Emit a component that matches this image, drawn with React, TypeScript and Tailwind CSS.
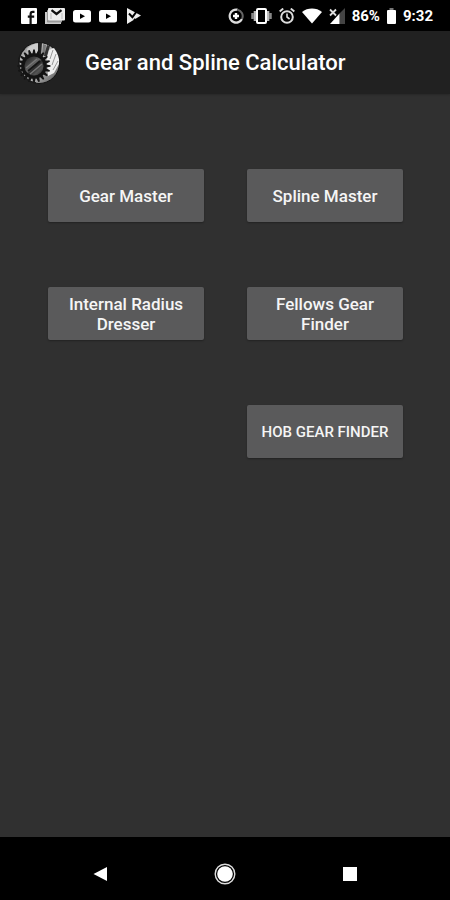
interface MenuButtonProps {
  label: string;
  className?: string;
}

const GEAR_TEETH = Array.from({ length: 20 }, (_, i) => i * 18);

function StatusBar() {
  return (
    <div className="flex h-[31px] items-center justify-between bg-black pt-px pr-[17px] pl-[21px] text-white">
      <div className="flex items-center gap-2">
        {/* Facebook */}
        <svg className="h-4 w-4" viewBox="0 0 16 16">
          <rect width="16" height="16" rx="1" fill="#fff" />
          <path
            d="M9.6 16V6.2c0-1.500.8-2.300 2.200-2.300h1.700M6.800 8.600h6.400"
            fill="none"
            stroke="#111"
            strokeWidth="2.2"
          />
        </svg>
        {/* Stacked mail */}
        <svg className="h-[18px] w-5" viewBox="0 0 20 18">
          <path d="M0 5v12h16v-2H2V5z" fill="#ccc" />
          <rect x="2" y="3" width="15" height="12.5" rx="1" fill="#999" />
          <rect x="3" y="1" width="17" height="12.5" rx="1" fill="#eee" />
          <path
            d="M6.5 3.2L11.5 7l5-3.8"
            fill="none"
            stroke="#111"
            strokeWidth="2.2"
          />
          <path d="M6 6v6M17 6v6" stroke="#bbb" />
        </svg>
        <YoutubeIcon />
        <YoutubeIcon />
        {/* Play store check */}
        <svg className="h-4 w-4" viewBox="0 0 16 16">
          <path d="M2 0l14 7.5L2 16z" fill="#eee" />
          <path
            d="M4 5.5l3.4 3.6L12 3"
            fill="none"
            stroke="#000"
            strokeWidth="2"
          />
          <path
            d="M9 11l4 3"
            fill="none"
            stroke="#000"
            strokeWidth="2"
          />
        </svg>
      </div>

      <div className="flex items-center gap-[7px] font-['Roboto',sans-serif] text-[15px] font-bold">
        {/* Data saver */}
        <svg className="h-4 w-4" viewBox="0 0 16 16" fill="none">
          <path
            d="M9.5 1.7A6.5 6.5 0 1 0 14 11"
            stroke="#ddd"
            strokeWidth="2.2"
          />
          <path
            d="M9.5 1.7A6.5 6.5 0 0 1 14 11"
            stroke="#666"
            strokeWidth="2"
          />
          <path d="M8 5v6M5 8h6" stroke="#fff" strokeWidth="2.4" />
        </svg>
        {/* Vibrate */}
        <svg className="h-4 w-[21px]" viewBox="0 0 21 16" fill="none">
          <path d="M1.5 5v6M19.5 5v6" stroke="#888" strokeWidth="2.5" />
          <path d="M4 3v10M17 3v10" stroke="#bbb" strokeWidth="2.6" />
          <rect
            x="6"
            y="1"
            width="9"
            height="14"
            rx="1"
            fill="#000"
            stroke="#fff"
            strokeWidth="2"
          />
        </svg>
        {/* Alarm */}
        <svg className="h-4 w-4" viewBox="0 0 16 16" fill="none">
          <circle cx="8" cy="9" r="5.8" stroke="#ddd" strokeWidth="2" />
          <path d="M.7 3.6l3.5-3M15.3 3.6l-3.5-3" stroke="#ddd" strokeWidth="2" />
          <path d="M8 5.5V9l2.6 2" stroke="#ddd" strokeWidth="1.6" />
        </svg>
        {/* Wifi */}
        <svg className="h-4 w-5" viewBox="0 0 20 16">
          <path d="M0 4C5.6-.6 14.4-.6 20 4L10 15.6z" fill="#fff" />
        </svg>
        {/* No signal */}
        <svg className="h-4 w-4" viewBox="0 0 16 16">
          <path d="M10.5 5.5L16 0v16h-5.5z" fill="#444" />
          <path d="M1 16l9.5-10.5V16z" fill="#fff" />
          <path d="M1 1.5l6 6M7 1.5l-6 6" stroke="#ddd" strokeWidth="1.8" />
        </svg>
        <span>86%</span>
        {/* Battery */}
        <svg className="h-4 w-[9px]" viewBox="0 0 9 16">
          <path d="M2.5 0h4v2h-4z" fill="#777" />
          <rect y="2" width="9" height="14" rx="1" fill="#fff" />
        </svg>
        <span>9:32</span>
      </div>
    </div>
  );
}

function YoutubeIcon() {
  return (
    <svg className="h-[14px] w-[18px]" viewBox="0 0 18 14">
      <rect y="1" width="18" height="12.5" rx="2.5" fill="#fff" />
      <path d="M7 4.5l5 2.8-5 2.8z" fill="#000" />
    </svg>
  );
}

function GearLogo() {
  return (
    <svg className="h-11 w-11 shrink-0" viewBox="0 0 44 44">
      <defs>
        <linearGradient id="ring" x1="0" y1="0" x2="1" y2="1">
          <stop offset="0" stopColor="#666" />
          <stop offset=".25" stopColor="#bbb" />
          <stop offset=".6" stopColor="#bbb" />
          <stop offset="1" stopColor="#444" />
        </linearGradient>
        <linearGradient id="hub" x1="0" y1="0" x2="1" y2="1">
          <stop offset="0" stopColor="#1c1c1c" />
          <stop offset=".3" stopColor="#444" />
          <stop offset=".46" stopColor="#666" />
          <stop offset=".56" stopColor="#2a2a2a" />
          <stop offset=".75" stopColor="#555" />
          <stop offset="1" stopColor="#1a1a1a" />
        </linearGradient>
      </defs>
      <circle cx="23" cy="22" r="20.5" fill="url(#ring)" stroke="#111" />
      {/* Reflections along the rim */}
      <path d="M11 8Q16 2.500 22 2.500l0 10-9 0z" fill="#ccc" />
      <path d="M22 2l4 0-1 12-3 0z" fill="#222" />
      <path d="M27 3l3 1-1 11-3-1z" fill="#777" />
      <path d="M31 4l3 1-3 10-3 0z" fill="#333" />
      <path d="M31 17l2-8 5-2q6 8 5 16l-5 9-6 3z" fill="#eee" />
      <path d="M37 9l-3 9M40 13l-4 11M42 20l-5 9" stroke="#999" />
      {/* Dark gear with its teeth reaching into the rim */}
      <circle cx="18" cy="25" r="12.8" fill="#131313" />
      {GEAR_TEETH.map((angle) => (
        <path
          key={angle}
          d="M16.4 13l.8-4.500h1.600l.8 4.500z"
          fill="#131313"
          transform={`rotate(${angle} 18 25)`}
        />
      ))}
      <path
        d="M9 7A20.500 20.500 0 0 0 20 42"
        fill="none"
        stroke="#1a1a1a"
        strokeWidth="1.5"
      />
      <circle cx="18" cy="25" r="9.5" fill="url(#hub)" />
      <path d="M10 27l11-9M14 33l12-10" stroke="#777" strokeWidth="1.5" />
      <path d="M12 30l12-10" stroke="#161616" strokeWidth="2" />
    </svg>
  );
}

function MenuButton({ label, className = "text-[17px]" }: MenuButtonProps) {
  return (
    <button
      type="button"
      className={`h-[53px] rounded-xs bg-[#5a5a5b] px-3 leading-5 font-medium text-[#f5f5f5] shadow-[0_1px_2px_rgba(0,0,0,0.3)] ${className}`}
    >
      {label}
    </button>
  );
}

function NavigationBar() {
  return (
    <nav className="flex h-[63px] items-center justify-between bg-black px-[88px] pt-[11px]">
      <button type="button" aria-label="Back" className="p-1">
        <svg className="h-4 w-4" viewBox="0 0 16 16">
          <path d="M15 1v14L1.5 8z" fill="#fff" />
        </svg>
      </button>
      <button type="button" aria-label="Home">
        <svg className="h-[22px] w-[22px]" viewBox="0 0 22 22">
          <circle
            cx="11"
            cy="11"
            r="9.8"
            fill="none"
            stroke="#ddd"
            strokeWidth="1.4"
          />
          <circle cx="11" cy="11" r="7.8" fill="#fff" />
        </svg>
      </button>
      <button type="button" aria-label="Recent apps" className="p-1">
        <svg className="h-4 w-4" viewBox="0 0 16 16">
          <rect x="1" y="1" width="14" height="14" fill="#fff" />
        </svg>
      </button>
    </nav>
  );
}

export default function App() {
  return (
    <div className="flex min-h-screen flex-col bg-[#303030] font-['Roboto',sans-serif]">
      <StatusBar />
      <header className="flex h-[63px] items-center gap-[25px] bg-[#212121] px-4 shadow-[0_1px_2px_rgba(0,0,0,0.2)]">
        <GearLogo />
        <h1 className="text-[22px] leading-7 font-medium text-white">
          Gear and Spline Calculator
        </h1>
      </header>
      <main className="grid flex-1 grid-cols-2 content-start gap-x-[43px] gap-y-[65px] pt-[75px] pr-[47px] pl-12">
        <MenuButton label="Gear Master" />
        <MenuButton label="Spline Master" />
        <MenuButton label="Internal Radius Dresser" />
        <MenuButton label="Fellows Gear Finder" />
        <MenuButton label="HOB GEAR FINDER" className="col-start-2 text-[15px]" />
      </main>
      <NavigationBar />
    </div>
  );
}
